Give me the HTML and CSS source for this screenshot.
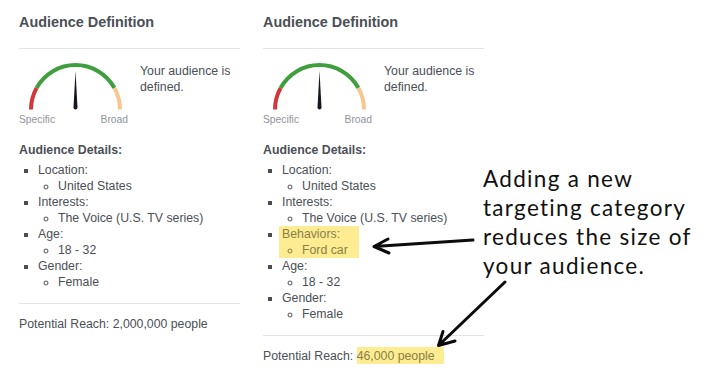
FILE: index.html
```html
<!DOCTYPE html>
<html>

<head>
	<link rel="stylesheet" href="styles.css">
</head>

<body>
	<div class="page">
		<div class="panel">
			<h2 class="title">Audience Definition</h2>
			<div class="rule"></div>
			<div class="meter">
				<div class="gauge">
					<svg class="dial" width="109" height="48" viewBox="0 0 109 48">
						<path d="M12 46.5 A44.5 44.5 0 0 1 17.58 24.93" class="arc-red" />
						<path d="M17.58 24.93 A44.5 44.5 0 0 1 95.42 24.93" class="arc-green" />
						<path d="M95.42 24.93 A44.5 44.5 0 0 1 101 46.5" class="arc-orange" />
						<path d="M56.5 8 L58.5 44.5 A2 2 0 0 1 54.5 44.5 Z" class="needle" />
					</svg>
					<div class="ends"><span>Specific</span><span>Broad</span></div>
				</div>
				<p class="status">Your audience is defined.</p>
			</div>
			<p class="details">Audience Details:</p>
			<ul class="list">
				<li>Location:
					<ul><li>United States</li></ul>
				</li>
				<li>Interests:
					<ul><li>The Voice (U.S. TV series)</li></ul>
				</li>
				<li>Age:
					<ul><li>18 - 32</li></ul>
				</li>
				<li>Gender:
					<ul><li>Female</li></ul>
				</li>
			</ul>
			<div class="rule bottom"></div>
			<p class="reach">Potential Reach: 2,000,000 people</p>
		</div>

		<div class="panel">
			<h2 class="title">Audience Definition</h2>
			<div class="rule"></div>
			<div class="meter">
				<div class="gauge">
					<svg class="dial" width="109" height="48" viewBox="0 0 109 48">
						<path d="M12 46.5 A44.5 44.5 0 0 1 17.58 24.93" class="arc-red" />
						<path d="M17.58 24.93 A44.5 44.5 0 0 1 95.42 24.93" class="arc-green" />
						<path d="M95.42 24.93 A44.5 44.5 0 0 1 101 46.5" class="arc-orange" />
						<path d="M56.5 8 L58.5 44.5 A2 2 0 0 1 54.5 44.5 Z" class="needle" />
					</svg>
					<div class="ends"><span>Specific</span><span>Broad</span></div>
				</div>
				<p class="status">Your audience is defined.</p>
			</div>
			<p class="details">Audience Details:</p>
			<ul class="list">
				<li>Location:
					<ul><li>United States</li></ul>
				</li>
				<li>Interests:
					<ul><li>The Voice (U.S. TV series)</li></ul>
				</li>
				<li><div class="mark">Behaviors:
					<ul><li>Ford car</li></ul>
				</div></li>
				<li>Age:
					<ul><li>18 - 32</li></ul>
				</li>
				<li>Gender:
					<ul><li>Female</li></ul>
				</li>
			</ul>
			<div class="rule bottom"></div>
			<p class="reach">Potential Reach: <span class="mark-inline">46,000 people</span></p>
		</div>

		<!-- callout drawn over the screenshot -->
		<p class="callout">Adding a new<br>targeting category<br>reduces the size of<br>your audience.</p>
		<svg class="arrows" width="704" height="382" viewBox="0 0 704 382">
			<path d="M473 240 L374 246.5 M374 246.5 L388 239 M374 246.5 L389 253" />
			<path d="M505 282 L438.5 345.5 M438.5 345.5 L443 331.5 M438.5 345.5 L455 341" />
		</svg>
	</div>
</body>

</html>
```

FILE: styles.css
```css
body {
	margin: 0;
	background-color: #ffffff;
	font-family: "Liberation Sans", Arial, sans-serif;
	color: #4b4f56;
}

.page {
	position: relative;
	display: flex;
	gap: 23px;
	padding-left: 19px;
	height: 382px;
	overflow: hidden;
}

.panel {
	width: 221px;
	flex: none;
}

.title {
	margin: 0;
	padding-top: 13px;
	font-size: 14.4px;
	line-height: 18px;
	font-weight: bold;
	color: #4b4f56;
}

.rule {
	height: 1px;
	margin-top: 17px;
	background-color: #e3e4e6;
}

.rule.bottom {
	margin-top: 13px;
}

.meter {
	display: flex;
	gap: 12px;
	margin-top: 14px;
}

.gauge {
	width: 109px;
	flex: none;
}

.dial {
	display: block;
}

.dial path {
	fill: none;
	stroke-width: 4;
}

.dial .arc-red {
	stroke: #d2383b;
}

.dial .arc-green {
	stroke: #3f9f3f;
}

.dial .arc-orange {
	stroke: #f8c68f;
}

.dial .needle {
	fill: #141823;
	stroke: none;
}

.ends {
	display: flex;
	justify-content: space-between;
	margin-top: 3px;
	font-size: 10.3px;
	line-height: 12px;
	color: #90949c;
}

.status {
	margin: 0;
	font-size: 12.3px;
	line-height: 16px;
}

.details {
	margin: 16px 0 0;
	font-size: 12.3px;
	line-height: 16px;
	font-weight: bold;
}

.list {
	margin: 4px 0 0;
	padding-left: 19px;
	list-style: square;
	font-size: 12.3px;
	line-height: 16px;
}

.list ul {
	margin: 0;
	padding-left: 20px;
	list-style: circle;
}

.mark {
	width: 77px;
	margin-left: -3px;
	padding-left: 3px;
	background-color: #fdec92;
	color: #8b7f45;
}

.reach {
	margin: 12px 0 0;
	font-size: 12.3px;
	line-height: 16px;
}

.mark-inline {
	padding: 2px 9px 1px 0;
	background-color: #fdec92;
	color: #8b7f45;
}

.callout {
	position: absolute;
	left: 483px;
	top: 164px;
	margin: 0;
	font-family: Lato, "Open Sans", sans-serif;
	font-size: 22.5px;
	line-height: 29px;
	letter-spacing: 1.3px;
	color: #111111;
	white-space: nowrap;
}

.arrows {
	position: absolute;
	left: 0;
	top: 0;
	pointer-events: none;
}

.arrows path {
	fill: none;
	stroke: #0c0c0c;
	stroke-width: 3;
	stroke-linecap: round;
	stroke-linejoin: round;
}
```
